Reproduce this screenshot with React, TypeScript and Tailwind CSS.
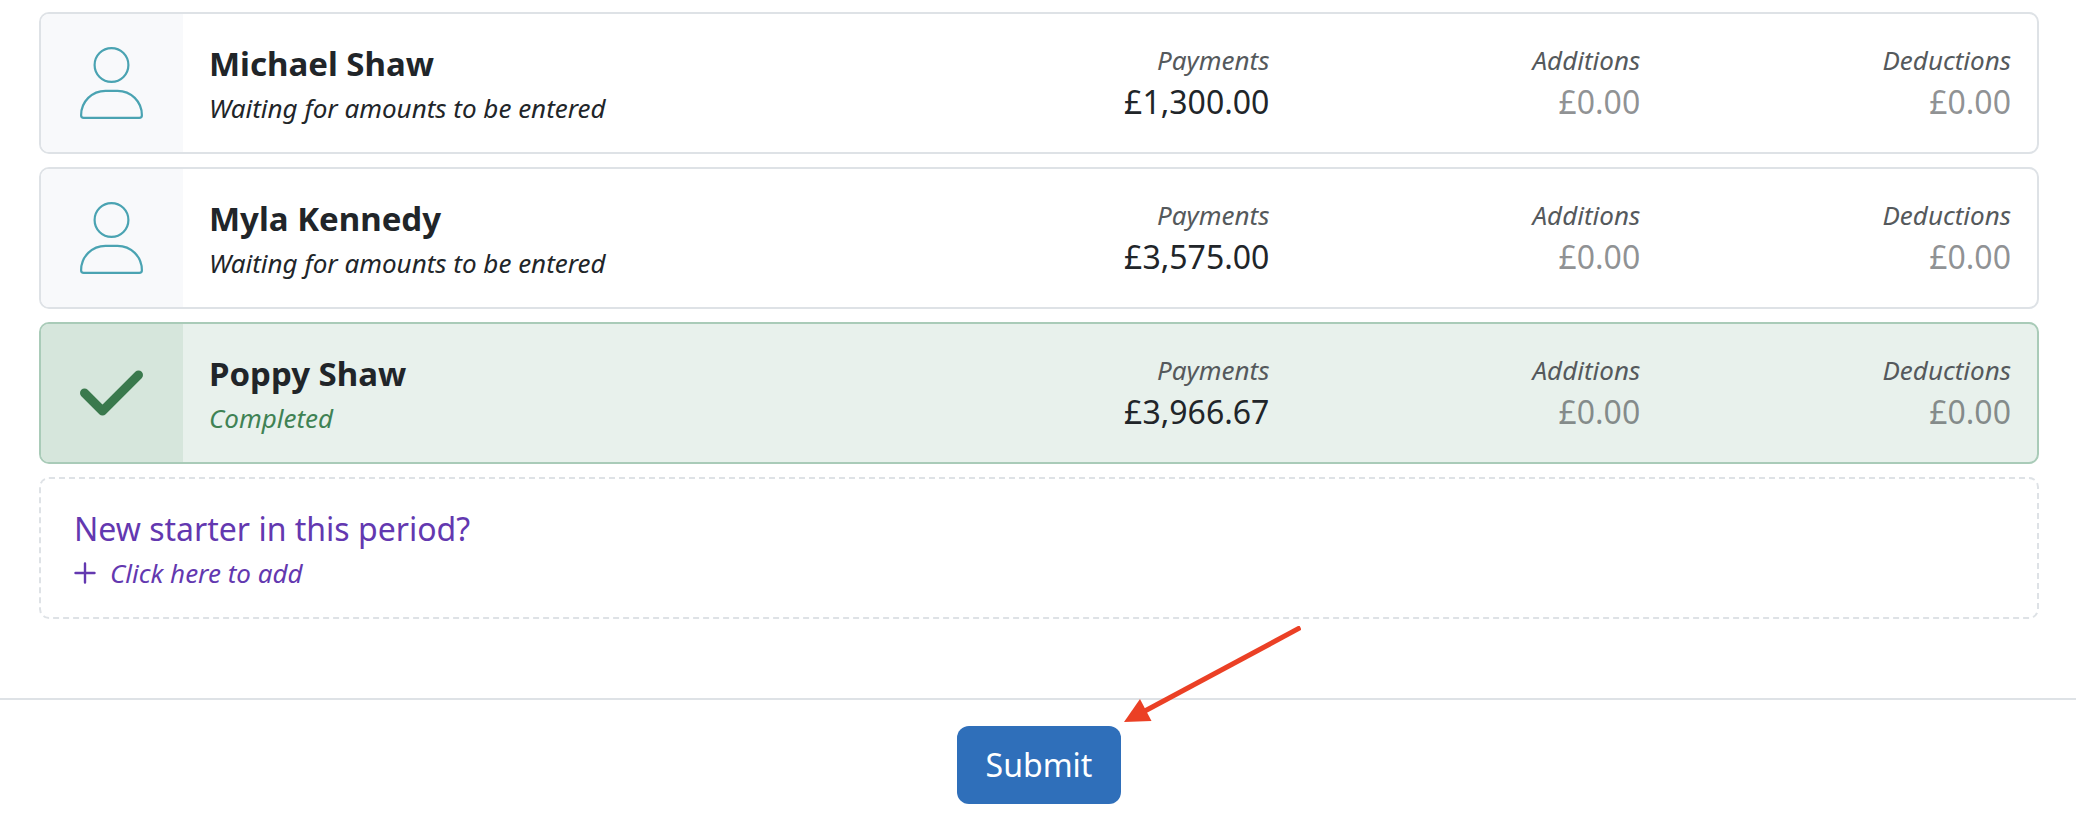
type Employee = {
  name: string;
  completed: boolean;
  payments: string;
  additions: string;
  deductions: string;
};

const employees: Employee[] = [
  { name: "Michael Shaw", completed: false, payments: "£1,300.00", additions: "£0.00", deductions: "£0.00" },
  { name: "Myla Kennedy", completed: false, payments: "£3,575.00", additions: "£0.00", deductions: "£0.00" },
  { name: "Poppy Shaw", completed: true, payments: "£3,966.67", additions: "£0.00", deductions: "£0.00" },
];

function UserIcon() {
  return (
    <svg viewBox="0 0 63 72" className="h-[72px] w-[63px] text-[#4aa3b2]" fill="none" stroke="currentColor" strokeWidth="2.2" aria-hidden="true">
      <circle cx="31.5" cy="18" r="16.9" />
      <path d="M25.5 43.8h12C51 43.8 61.9 54.6 61.9 68.2c0 1.5-1.2 2.7-2.7 2.7H3.8c-1.5 0-2.7-1.2-2.7-2.7C1.1 54.6 12 43.8 25.5 43.8Z" />
    </svg>
  );
}

function CheckIcon() {
  return (
    <svg viewBox="0 0 63 72" className="h-[72px] w-[63px] text-[#3a794d]" fill="none" stroke="currentColor" strokeWidth="9" strokeLinecap="round" strokeLinejoin="round" aria-hidden="true">
      <path d="M4.5 36 22.5 54 58.5 18" />
    </svg>
  );
}

function PlusIcon() {
  return (
    <svg viewBox="0 0 22 22" className="h-[22px] w-[22px]" fill="none" stroke="currentColor" strokeWidth="2.4" strokeLinecap="round" aria-hidden="true">
      <path d="M11 1.5v19M1.5 11h19" />
    </svg>
  );
}

function Amount({ label, value, strong }: { label: string; value: string; strong?: boolean }) {
  return (
    <div className="flex flex-col justify-center px-[26px] pb-0.5 text-right">
      <dt className="text-[26px] leading-10 text-[#55595c] italic">{label}</dt>
      <dd className={strong ? "text-[32px] leading-11 text-[#212529]" : "text-[32px] leading-11 text-[#212529]/50"}>{value}</dd>
    </div>
  );
}

function EmployeeCard({ employee }: { employee: Employee }) {
  const done = employee.completed;
  return (
    <li
      className={
        done
          ? "flex min-h-[142px] overflow-hidden rounded-[10px] border-2 border-[#a9cbb8] bg-[#e8f1ec]"
          : "flex min-h-[142px] overflow-hidden rounded-[10px] border-2 border-[#dee2e6] bg-white"
      }
    >
      <div
        className={
          done
            ? "flex w-[142px] shrink-0 items-center justify-center bg-[#d6e6dc] pr-0.5"
            : "flex w-[142px] shrink-0 items-center justify-center bg-[#f8f9fb] pr-0.5"
        }
      >
        {done ? <CheckIcon /> : <UserIcon />}
      </div>
      <dl className="grid grow grid-cols-5">
        <div className="col-span-2 flex flex-col justify-center px-[26px] pt-0.5">
          <dt className="text-[33px] leading-12 font-bold text-[#212529]">{employee.name}</dt>
          <dd className={done ? "text-[26px] leading-10 text-[#3f8254] italic" : "text-[26px] leading-10 text-[#212529] italic"}>
            {done ? "Completed" : "Waiting for amounts to be entered"}
          </dd>
        </div>
        <Amount label="Payments" value={employee.payments} strong />
        <Amount label="Additions" value={employee.additions} />
        <Amount label="Deductions" value={employee.deductions} />
      </dl>
    </li>
  );
}

export default function App() {
  return (
    <div className="bg-white font-['Noto_Sans',sans-serif]">
      <main className="pt-3 pr-[37px] pb-[79px] pl-[39px]">
        <ul className="flex flex-col gap-[13px]">
          {employees.map((employee) => (
            <EmployeeCard key={employee.name} employee={employee} />
          ))}
          <li>
            <a
              href="#new-starter"
              className="flex min-h-[142px] flex-col justify-center rounded-[10px] border-2 border-dashed border-[#dee2e6] px-[33px] pt-0.5 text-[#6338b0]"
            >
              <span className="text-[32px] leading-12">New starter in this period?</span>
              <span className="flex items-center gap-[14px] text-[26px] leading-10 italic">
                <PlusIcon />
                Click here to add
              </span>
            </a>
          </li>
        </ul>
      </main>
      <footer className="flex justify-center border-t-2 border-[#dee2e6] pt-[26px] pb-4 pl-0.5">
        <div className="relative">
          <button type="button" className="h-[78px] rounded-xl bg-[#2f6fba] px-[29px] text-[32px] text-white">
            Submit
          </button>
          <svg viewBox="0 0 180 100" className="pointer-events-none absolute bottom-full left-full h-[100px] w-[180px]" aria-hidden="true">
            <path d="M179.5 1.500 22 86" stroke="#eb4025" strokeWidth="5" />
            <path d="M3 96 19 73 30.500 95Z" fill="#eb4025" />
          </svg>
        </div>
      </footer>
    </div>
  );
}
